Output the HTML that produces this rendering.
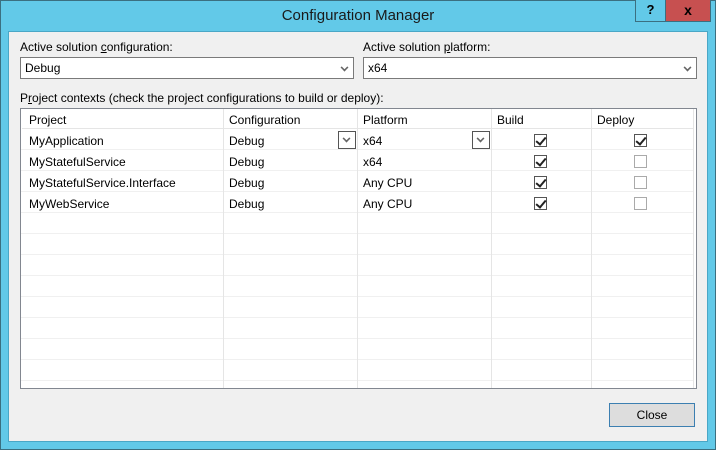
<!DOCTYPE html><html><head><style>
*{margin:0;padding:0;box-sizing:border-box}
body{width:716px;height:450px;background:#62c9e8;font-family:"Liberation Sans",sans-serif;font-size:12px;color:#000;position:relative;overflow:hidden}
.a{position:absolute}
.frame{left:0;top:0;width:716px;height:450px;border:1px solid #3b6f80}
.client{left:8px;top:31px;width:700px;height:411px;background:#f0f0f0;border:1px solid #4aa7c6}
.combo{background:#fff;border:1px solid #7a7a7a;height:22px;padding:3px 4px}
.chev{position:absolute;right:5px;top:6px;width:7px;height:7px;border-right:2px solid #666;border-bottom:2px solid #666;transform:rotate(45deg) scale(.8)}
.grid{left:20px;top:108px;width:677px;height:281px;background:#fff;border:1px solid #828790}
.hl{position:absolute;left:0;width:672px;height:1px;background:#f0f0f0}
.vl{position:absolute;top:0;width:1px;height:279px;background:#f0f0f0}
.t{position:absolute;white-space:nowrap}
.cb{position:absolute;width:13px;height:13px;border:1px solid #555;background:#fff}
.cb.off{border-color:#aaa}
.cb.on::after{content:"";position:absolute;left:3px;top:0px;width:4px;height:8px;border-right:2.5px solid #222;border-bottom:2.5px solid #222;transform:rotate(40deg)}
.dd{position:absolute;width:18px;height:18px;border:1px solid #555;background:#fff}
.dd .chev{right:5px;top:3px}
</style></head><body>
<div class="a frame"></div>
<div class="a t" style="left:0;width:716px;top:7px;text-align:center;font-size:15px;color:#1a1a1a">Configuration Manager</div>
<div class="a" style="left:635px;top:0;width:31px;height:22px;background:#62c9e8;border:1px solid #3b6f80;border-top:none;text-align:center;font-weight:bold;font-size:13px;line-height:20px">?</div>
<div class="a" style="left:665px;top:0;width:46px;height:22px;background:#c75050;border:1px solid #3b6f80;border-top:none;text-align:center;font-weight:bold;font-size:14px;line-height:20px">x</div>
<div class="a client"></div>
<div class="a t" style="left:20px;top:40px">Active solution <u>c</u>onfiguration:</div>
<div class="a combo" style="left:20px;top:57px;width:334px">Debug<div class="chev"></div></div>
<div class="a t" style="left:363px;top:40px">Active solution <u>p</u>latform:</div>
<div class="a combo" style="left:363px;top:57px;width:334px">x64<div class="chev"></div></div>
<div class="a t" style="left:20px;top:91px">P<u>r</u>oject contexts (check the project configurations to build or deploy):</div>
<div class="a grid">
<div class="a" style="left:1px;top:0;width:671px;height:20px;background:#fff;border-bottom:1px solid #e5e5e5"></div>
<div class="hl" style="top:40px"></div><div class="hl" style="top:61px"></div><div class="hl" style="top:82px"></div><div class="hl" style="top:103px"></div><div class="hl" style="top:124px"></div><div class="hl" style="top:145px"></div><div class="hl" style="top:166px"></div><div class="hl" style="top:187px"></div><div class="hl" style="top:208px"></div><div class="hl" style="top:229px"></div><div class="hl" style="top:250px"></div><div class="hl" style="top:271px"></div>
<div class="vl" style="left:202px;background:#e5e5e5"></div><div class="vl" style="left:336px;background:#e5e5e5"></div><div class="vl" style="left:470px;background:#e5e5e5"></div><div class="vl" style="left:570px;background:#e5e5e5"></div><div class="vl" style="left:672px;background:#e5e5e5"></div>
<div class="t" style="left:8px;top:4px">Project</div><div class="t" style="left:208px;top:4px">Configuration</div><div class="t" style="left:342px;top:4px">Platform</div><div class="t" style="left:476px;top:4px">Build</div><div class="t" style="left:576px;top:4px">Deploy</div>
<div class="t" style="left:8px;top:25px">MyApplication</div><div class="t" style="left:208px;top:25px">Debug</div><div class="t" style="left:342px;top:25px">x64</div>
<div class="dd" style="left:317px;top:22px"><div class="chev"></div></div><div class="dd" style="left:451px;top:22px"><div class="chev"></div></div>
<div class="t" style="left:8px;top:46px">MyStatefulService</div><div class="t" style="left:208px;top:46px">Debug</div><div class="t" style="left:342px;top:46px">x64</div>
<div class="t" style="left:8px;top:67px">MyStatefulService.Interface</div><div class="t" style="left:208px;top:67px">Debug</div><div class="t" style="left:342px;top:67px">Any CPU</div>
<div class="t" style="left:8px;top:88px">MyWebService</div><div class="t" style="left:208px;top:88px">Debug</div><div class="t" style="left:342px;top:88px">Any CPU</div>
<div class="cb on" style="left:513px;top:25px"></div><div class="cb on" style="left:613px;top:25px"></div>
<div class="cb on" style="left:513px;top:46px"></div><div class="cb off" style="left:613px;top:46px"></div>
<div class="cb on" style="left:513px;top:67px"></div><div class="cb off" style="left:613px;top:67px"></div>
<div class="cb on" style="left:513px;top:88px"></div><div class="cb off" style="left:613px;top:88px"></div>
</div>
<div class="a" style="left:609px;top:403px;width:86px;height:24px;background:#dddddd;border:1px solid #3c7fb1;text-align:center;line-height:22px">Close</div>
</body></html>
